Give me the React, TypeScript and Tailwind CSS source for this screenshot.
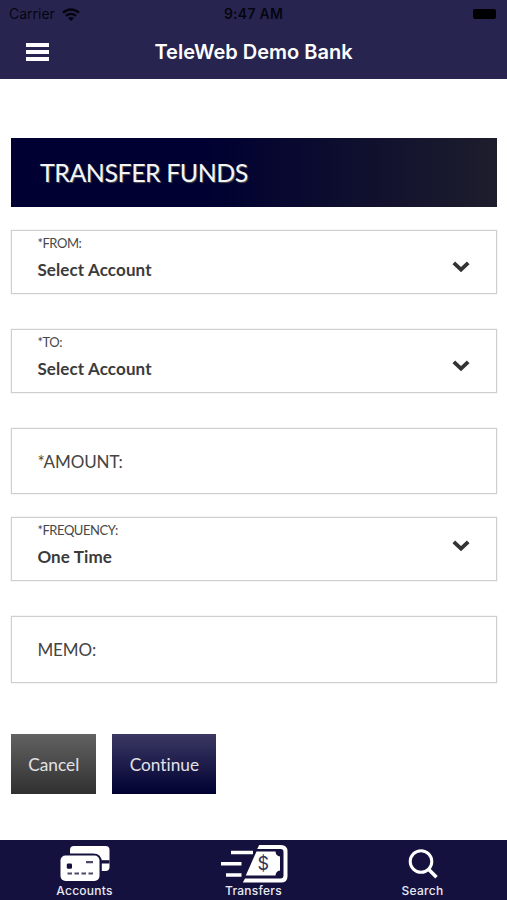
import React from "react";

const lato = "font-['Lato',sans-serif]";
const fieldBox = "border border-[#cfcfcf] shadow-[0_0_1px_#c4c4c4]";

function StatusBar() {
  return (
    <div className="grid h-7 grid-cols-[1fr_auto_1fr] items-center px-[9px] text-[#050511]">
      <div className="flex items-center gap-[7px]">
        <span className="text-[14px] leading-[28px]">Carrier</span>
        <svg width="18" height="13" viewBox="0 0 18 13" fill="none" stroke="currentColor" strokeWidth="2.6">
          <path d="M1 4.6C5.5.4 12.5.4 17 4.6M4 7.9c2.9-2.6 7.1-2.6 10 0" />
          <path d="M6 10c1.8-1.5 4.2-1.5 6 0l-3 3z" fill="currentColor" stroke="none" />
        </svg>
      </div>
      <span className="text-[14px] leading-[28px] font-semibold tracking-[0.25px]">9:47 AM</span>
      <div className="mr-[2px] flex items-center justify-self-end">
        <div className="h-[10px] w-[23px] rounded-[2px] bg-black" />
      </div>
    </div>
  );
}

function Header() {
  return (
    <header className="h-[79px] shrink-0 bg-[#27254f]">
      <StatusBar />
      <div className="grid h-[48px] grid-cols-[1fr_auto_1fr] items-center text-white">
        <button aria-label="Menu" className="ml-[26px] flex w-[23px] flex-col gap-[3px]">
          <span className="h-[4px] bg-white" />
          <span className="h-[4px] bg-white" />
          <span className="h-[4px] bg-white" />
        </button>
        <h1 className="text-[20px] leading-[48px] font-semibold">TeleWeb Demo Bank</h1>
      </div>
    </header>
  );
}

function SelectField({
  label,
  value,
  className = "",
  chevronClass = "mt-[30px]",
}: {
  label: string;
  value: string;
  className?: string;
  chevronClass?: string;
}) {
  return (
    <div className={`flex h-[64px] items-start justify-between pr-[26.5px] pl-[25.4px] ${fieldBox} ${className}`}>
      <div className="flex flex-col">
        <span className="mt-[4px] text-[13px] leading-[16px] tracking-[-0.45px] text-[#484848]">{label}</span>
        <span className="mt-[8px] text-[17px] leading-[22px] font-bold tracking-[0.12px] text-[#3b3b3b]">{value}</span>
      </div>
      <svg width="18" height="12" viewBox="0 0 18 12" className={chevronClass} fill="none" stroke="#333" strokeWidth="3.8">
        <path d="m1.8 1.8 7.2 6.9 7.2-6.9" />
      </svg>
    </div>
  );
}

function InputField({ label, className = "" }: { label: string; className?: string }) {
  return (
    <div className={`flex items-center pt-px pl-[25.4px] text-[17px] leading-[22px] tracking-[-0.1px] text-[#444] ${fieldBox} ${className}`}>
      {label}
    </div>
  );
}

function CardsIcon() {
  return (
    <svg width="50" height="36" viewBox="0 0 50 36" fill="#fff">
      <rect x="10" y="0" width="39.5" height="25" rx="4" />
      <path d="M40 14.2h9.5v3.3H40z" fill="#14113f" />
      <path d="M0 7.5h33q8.8 0 8.8 9V36H0z" fill="#14113f" />
      <rect x="0.5" y="9.5" width="39" height="25.5" rx="5" />
      <rect x="6.8" y="17.5" width="5.2" height="5.2" rx="1.3" fill="#14113f" />
      <path d="M26 16.2h7M7.5 27.5H12M14.5 27.5H19M21.5 27.5H26M28.5 27.5H33" fill="none" stroke="#4a486b" strokeWidth="2.2" />
    </svg>
  );
}

function TransferIcon() {
  return (
    <svg width="68" height="38" viewBox="0 0 68 38" fill="none" stroke="#fff">
      <path d="M11 7.5h22M1 18.7h20.5M6 30h15.5" strokeWidth="3.4" />
      <path d="M39.2 0H61q6.5 0 6.5 6.5v24.7q0 6.3-6.5 6.3H22.8l2.2-4h35.5q3 0 3-3V7q0-3-3-3H37.2z" fill="#fff" stroke="none" />
      <path d="M36.5 6.5H55.5q.4 4.5 4.5 5v14q-4.1.5-4.5 5H25.8z" fill="#fff" stroke="none" />
      <text x="43.2" y="25" textAnchor="middle" fontSize="18" fontWeight="400" fontFamily="Inter, sans-serif" fill="#343257" stroke="none">$</text>
    </svg>
  );
}

function SearchIcon() {
  return (
    <svg width="30" height="31" viewBox="0 0 30 31" fill="none" stroke="#fff" strokeWidth="3">
      <circle cx="13" cy="12.5" r="10.8" />
      <path d="m20.5 20.3 8 8" strokeWidth="3.6" />
    </svg>
  );
}

function NavItem({ label, children }: { label: string; children: React.ReactNode }) {
  return (
    <button className="flex flex-1 flex-col items-center text-white">
      <span className="flex h-[38px] items-center justify-center">{children}</span>
      <span className="text-[12px] leading-[15px] font-medium tracking-[0.25px] text-[#e9e9f2]">{label}</span>
    </button>
  );
}

export default function App() {
  return (
    <div className="flex h-[900px] w-[507px] flex-col overflow-hidden bg-white font-['Inter',sans-serif]">
      <Header />
      <main className={`flex-1 pt-[59px] pr-[10px] pl-[11px] ${lato}`}>
        <h2 className="flex h-[69px] items-center bg-linear-to-r/srgb from-[#000032] from-40% to-[#1d1d2c] pl-[29px] text-[25px] tracking-[-0.5px] text-[#f4f4f4] [text-shadow:1px_1px_1px_#555]">
          TRANSFER FUNDS
        </h2>
        <SelectField label="*FROM:" value="Select Account" className="mt-[23px]" />
        <SelectField label="*TO:" value="Select Account" className="mt-[35px]" />
        <InputField label="*AMOUNT:" className="mt-[35px] h-[66px]" />
        <SelectField label="*FREQUENCY:" value="One Time" className="mt-[23px]" chevronClass="mt-[22px]" />
        <InputField label="MEMO:" className="mt-[35px] h-[67px]" />
        <div className="mt-[51px] flex gap-[16px] text-[17.3px] text-[#e2e2e6] [font-variant-ligatures:none]">
          <button className="h-[60px] w-[85.4px] bg-linear-to-b/srgb from-[#626262] to-[#303030] pt-[2px]">Cancel</button>
          <button className="h-[60px] w-[104px] bg-linear-to-b/srgb from-[#3b3963] to-[#000032] pt-[2px]">Continue</button>
        </div>
      </main>
      <nav className="flex h-[60px] shrink-0 bg-[#14113f] pt-[5px]">
        <NavItem label="Accounts"><CardsIcon /></NavItem>
        <NavItem label="Transfers"><TransferIcon /></NavItem>
        <NavItem label="Search"><SearchIcon /></NavItem>
      </nav>
    </div>
  );
}
